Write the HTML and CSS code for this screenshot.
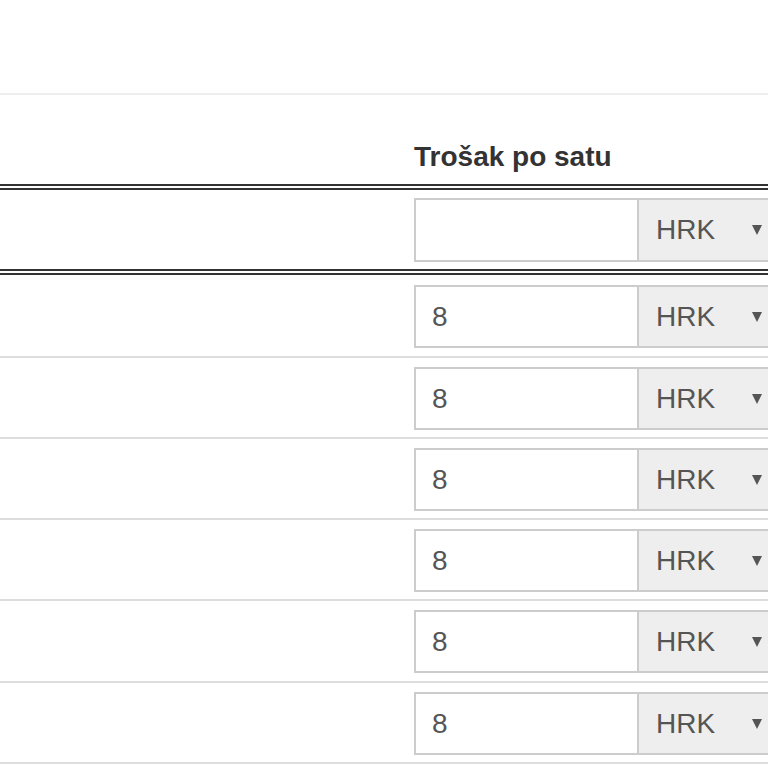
FILE: index.html
```html
<!DOCTYPE html>
<html lang="hr">
<head>
<meta charset="utf-8">
<title>Trošak po satu</title>
<link rel="stylesheet" href="styles.css">
</head>
<body>
<div class="page">
  <table class="cost-table">
    <colgroup>
      <col class="col-name">
      <col class="col-cost">
    </colgroup>
    <thead>
      <tr>
        <th></th>
        <th>Trošak po satu</th>
      </tr>
    </thead>
    <tbody class="default-row">
      <tr>
        <td></td>
        <td>
          <div class="input-group">
            <input class="cost-input" type="text" value="">
            <div class="currency"><span>HRK</span><i class="caret"></i></div>
          </div>
        </td>
      </tr>
    </tbody>
    <tbody class="rows">
      <tr class="first">
        <td></td>
        <td><div class="input-group"><input class="cost-input" type="text" value="8"><div class="currency"><span>HRK</span><i class="caret"></i></div></div></td>
      </tr>
      <tr>
        <td></td>
        <td><div class="input-group"><input class="cost-input" type="text" value="8"><div class="currency"><span>HRK</span><i class="caret"></i></div></div></td>
      </tr>
      <tr>
        <td></td>
        <td><div class="input-group"><input class="cost-input" type="text" value="8"><div class="currency"><span>HRK</span><i class="caret"></i></div></div></td>
      </tr>
      <tr>
        <td></td>
        <td><div class="input-group"><input class="cost-input" type="text" value="8"><div class="currency"><span>HRK</span><i class="caret"></i></div></div></td>
      </tr>
      <tr class="tall">
        <td></td>
        <td><div class="input-group"><input class="cost-input" type="text" value="8"><div class="currency"><span>HRK</span><i class="caret"></i></div></div></td>
      </tr>
      <tr>
        <td></td>
        <td><div class="input-group"><input class="cost-input" type="text" value="8"><div class="currency"><span>HRK</span><i class="caret"></i></div></div></td>
      </tr>
    </tbody>
  </table>
</div>
</body>
</html>
```

FILE: styles.css
```css
html, body {
  margin: 0;
  padding: 0;
  background: #fff;
  overflow: hidden;
}

.page {
  width: 768px;
  height: 768px;
  overflow: hidden;
  padding-top: 93px;
  box-sizing: border-box;
  font-family: "Liberation Sans", Arial, sans-serif;
  font-size: 28px;
  color: #333;
}

.cost-table {
  width: 820px;
  border-collapse: separate;
  border-spacing: 0;
  table-layout: fixed;
}

.col-name { width: 404px; }
.col-cost { width: 416px; }

.cost-table th,
.cost-table td {
  padding: 0 0 0 10px;
  vertical-align: middle;
}

.cost-table th {
  border-top: 2px solid #eee;
  border-bottom: 6px double #333;
  height: 97px;
  box-sizing: border-box;
  padding-bottom: 7px;
  vertical-align: bottom;
  text-align: left;
  font-weight: bold;
  line-height: 40px;
  color: #333;
}

.default-row td {
  height: 79px;
  box-sizing: border-box;
  padding-top: 8px;
  padding-bottom: 7px;
  border-bottom: 6px double #333;
}

.default-row .input-group,
.default-row .cost-input,
.default-row .currency {
  height: 64px;
}

.rows td {
  padding-top: 9px;
  padding-bottom: 7px;
  border-bottom: 2px solid #ddd;
}

.rows .first td {
  padding-top: 10px;
  padding-bottom: 8px;
}

.rows .tall td {
  padding-bottom: 8px;
}

.input-group {
  display: flex;
  height: 63px;
}

.cost-input {
  width: 223px;
  height: 63px;
  box-sizing: border-box;
  margin: 0;
  border: 2px solid #ccc;
  border-right: 0;
  padding: 0 16px;
  font-family: "Liberation Sans", Arial, sans-serif;
  font-size: 28px;
  color: #555;
  background: #fff;
  outline: none;
}

.currency {
  flex: 1;
  height: 63px;
  box-sizing: border-box;
  border: 2px solid #ccc;
  background: #eee;
  display: flex;
  align-items: center;
  padding-left: 17px;
  color: #555;
  font-size: 28px;
}

.caret {
  width: 0;
  height: 0;
  margin-left: 37px;
  border-left: 5.5px solid transparent;
  border-right: 5.5px solid transparent;
  border-top: 10px solid #555;
}
```
